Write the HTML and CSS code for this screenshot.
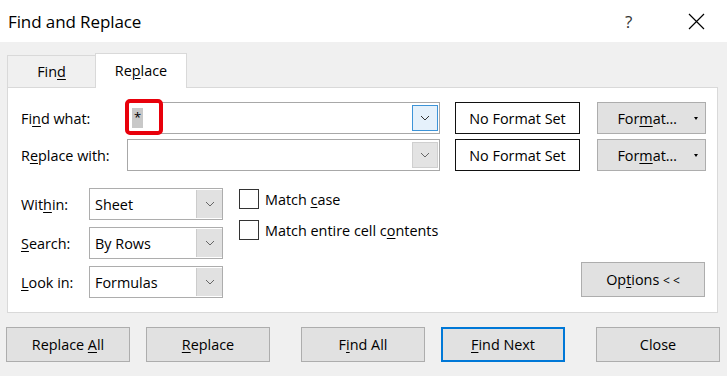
FILE: index.html
```html
<!DOCTYPE html>
<html lang="en">
<head>
<meta charset="utf-8">
<title>Find and Replace</title>
<link rel="stylesheet" href="styles.css">
</head>
<body>
<div class="window">
  <div class="titlebar">
    <span class="title">Find and Replace</span>
    <div class="controls">
      <span class="help">?</span>
      <svg class="close-x" width="17" height="17" viewBox="0 0 17 17"><path d="M1 1 L16 16 M16 1 L1 16" stroke="#000" stroke-width="1.2" fill="none"/></svg>
    </div>
  </div>

  <div class="tabs">
    <div class="tab"><span>Fin<u>d</u></span></div>
    <div class="tab active"><span>Re<u>p</u>lace</span></div>
  </div>

  <div class="panel">
    <div class="fields">
      <div class="field-row">
        <div class="flabel"><span>Fi<u>n</u>d what:</span></div>
        <div class="combo">
          <div class="combo-text"><span class="selected">*</span></div>
          <div class="drop hot"><svg width="10" height="6" viewBox="0 0 10 6"><path d="M1 1 L5 5 L9 1" stroke="#333" stroke-width="1" fill="none"/></svg></div>
          <div class="marker"></div>
        </div>
        <div class="fmtbox">No Format Set</div>
        <div class="fmtbtn"><span class="fmtlabel">For<u>m</u>at…</span><span class="caret"></span></div>
      </div>
      <div class="field-row">
        <div class="flabel"><span>R<u>e</u>place with:</span></div>
        <div class="combo">
          <div class="combo-text"></div>
          <div class="drop"><svg width="10" height="6" viewBox="0 0 10 6"><path d="M1 1 L5 5 L9 1" stroke="#666" stroke-width="1" fill="none"/></svg></div>
        </div>
        <div class="fmtbox">No Format Set</div>
        <div class="fmtbtn"><span class="fmtlabel">For<u>m</u>at…</span><span class="caret"></span></div>
      </div>
    </div>

    <div class="lower">
      <div class="selects">
        <div class="sel-row">
          <div class="slabel"><span>Wit<u>h</u>in:</span></div>
          <div class="select"><span class="select-text">Sheet</span><span class="sbtn"><svg width="10" height="6" viewBox="0 0 10 6"><path d="M1 1 L5 5 L9 1" stroke="#666" stroke-width="1" fill="none"/></svg></span></div>
        </div>
        <div class="sel-row">
          <div class="slabel"><span><u>S</u>earch:</span></div>
          <div class="select"><span class="select-text">By Rows</span><span class="sbtn"><svg width="10" height="6" viewBox="0 0 10 6"><path d="M1 1 L5 5 L9 1" stroke="#666" stroke-width="1" fill="none"/></svg></span></div>
        </div>
        <div class="sel-row">
          <div class="slabel"><span><u>L</u>ook in:</span></div>
          <div class="select"><span class="select-text">Formulas</span><span class="sbtn"><svg width="10" height="6" viewBox="0 0 10 6"><path d="M1 1 L5 5 L9 1" stroke="#666" stroke-width="1" fill="none"/></svg></span></div>
        </div>
      </div>
      <div class="checks">
        <div class="check-row"><span class="box"></span><span>Match <u>c</u>ase</span></div>
        <div class="check-row"><span class="box"></span><span>Match entire cell c<u>o</u>ntents</span></div>
      </div>
      <div class="opt-wrap">
        <div class="btn options"><span>Op<u>t</u>ions <span class="lt">&lt; &lt;</span></span></div>
      </div>
    </div>
  </div>

  <div class="actions">
    <div class="btn"><span>Replace <u>A</u>ll</span></div>
    <div class="btn"><span><u>R</u>eplace</span></div>
    <div class="btn wide-gap"><span>F<u>i</u>nd All</span></div>
    <div class="btn default"><span><u>F</u>ind Next</span></div>
    <div class="btn wide-gap"><span>Close</span></div>
  </div>
</div>
</body>
</html>
```

FILE: styles.css
```css
* { box-sizing: border-box; }
html, body {
  margin: 0;
  padding: 0;
}
body {
  width: 727px;
  height: 376px;
  overflow: hidden;
  background: #f0f0f0;
  font-family: "Open Sans", "Noto Sans", "Liberation Sans", sans-serif;
  font-size: 14.4px;
  color: #000;
}
u { text-decoration: underline; text-underline-offset: 2px; text-decoration-thickness: 1px; }

.window { width: 727px; height: 376px; }

.titlebar {
  height: 42px;
  background: #fff;
  display: flex;
  align-items: center;
  padding-left: 8px;
}
.title { font-size: 17px; letter-spacing: -0.1px; }
.controls {
  margin-left: auto;
  display: flex;
  align-items: center;
  padding-right: 22px;
}
.help { font-size: 17px; width: 63px; color: #333; }
.close-x { display: block; }

.tabs {
  height: 45px;
  padding: 11px 0 0 7px;
  display: flex;
  align-items: flex-end;
}
.tab {
  width: 88px;
  height: 32px;
  border-top: 1px solid #d9d9d9;
  border-left: 1px solid #d9d9d9;
  background: #f0f0f0;
  display: flex;
  align-items: center;
  justify-content: center;
}
.tab.active {
  width: 92px;
  height: 35px;
  background: #fff;
  border-right: 1px solid #d9d9d9;
  margin-bottom: -1px;
  padding-bottom: 2px;
  position: relative;
  z-index: 1;
}

.panel {
  margin-left: 7px;
  width: 711px;
  height: 226px;
  background: #fff;
  border: 1px solid #d9d9d9;
  padding: 14px 11px 0 13px;
}

.fields { display: flex; flex-direction: column; gap: 5px; }
.field-row { display: flex; height: 32px; align-items: stretch; }
.flabel { width: 106px; display: flex; align-items: center; }
.combo {
  width: 313px;
  border: 1px solid #a8a8a8;
  display: flex;
  align-items: center;
  position: relative;
}
.combo-text { flex: 1; padding-left: 4px; display: flex; align-items: center; height: 100%; }
.selected {
  background: #c8c8c8;
  display: inline-block;
  width: 11px;
  height: 20px;
  line-height: 18px;
  padding-left: 2px;
  font-size: 13px;
}
.drop {
  width: 26px;
  height: 26px;
  margin-right: 1px;
  border: 1px solid #cfcfcf;
  background: #e3e3e3;
  display: flex;
  align-items: center;
  justify-content: center;
}
.drop.hot { background: #e5f1fb; border-color: #3d94d8; }
.marker {
  position: absolute;
  left: -3px;
  top: -4px;
  width: 38px;
  height: 36px;
  border: 4px solid #e8000b;
  border-radius: 5px;
}
.fmtbox {
  margin-left: 15px;
  width: 125px;
  border: 1px solid #111;
  display: flex;
  align-items: center;
  justify-content: center;
}
.fmtbtn {
  margin-left: 17px;
  width: 109px;
  background: #e1e1e1;
  border: 1px solid #adadad;
  display: flex;
  align-items: center;
  justify-content: flex-end;
  padding-right: 7px;
}
.fmtlabel { margin-right: 17px; }
.caret {
  width: 0; height: 0;
  border-left: 2.5px solid transparent;
  border-right: 2.5px solid transparent;
  border-top: 3px solid #000;
}

.lower {
  margin-top: 17px;
  display: flex;
  align-items: flex-start;
}
.selects { display: flex; flex-direction: column; gap: 7px; }
.sel-row { display: flex; height: 32px; }
.slabel { width: 68px; display: flex; align-items: center; }
.select {
  width: 134px;
  border: 1px solid #adadad;
  display: flex;
  align-items: stretch;
}
.select-text { flex: 1; padding-left: 5px; display: flex; align-items: center; }
.sbtn {
  width: 26px;
  margin: 1px 0;
  background: #e1e1e1;
  border-left: 1px solid #cccccc;
  display: flex;
  align-items: center;
  justify-content: center;
}
.checks {
  margin-left: 16px;
  padding-top: 1px;
  display: flex;
  flex-direction: column;
  gap: 11px;
}
.check-row { display: flex; align-items: center; height: 20px; gap: 6px; }
.box { width: 20px; height: 20px; border: 1px solid #333; background: #fff; }
.opt-wrap {
  margin-left: auto;
  align-self: flex-end;
  margin-bottom: 1px;
  margin-right: 1px;
}
.btn {
  width: 124px;
  height: 35px;
  background: #e1e1e1;
  border: 1px solid #adadad;
  display: flex;
  align-items: center;
  justify-content: center;
}
.btn.options { height: 35px; }
.lt { font-size: 12px; }

.actions {
  margin-top: 14px;
  padding-left: 6px;
  display: flex;
  gap: 16px;
}
.btn.wide-gap { margin-left: 15px; }
.btn.default { border: 2px solid #0078d7; }
```
